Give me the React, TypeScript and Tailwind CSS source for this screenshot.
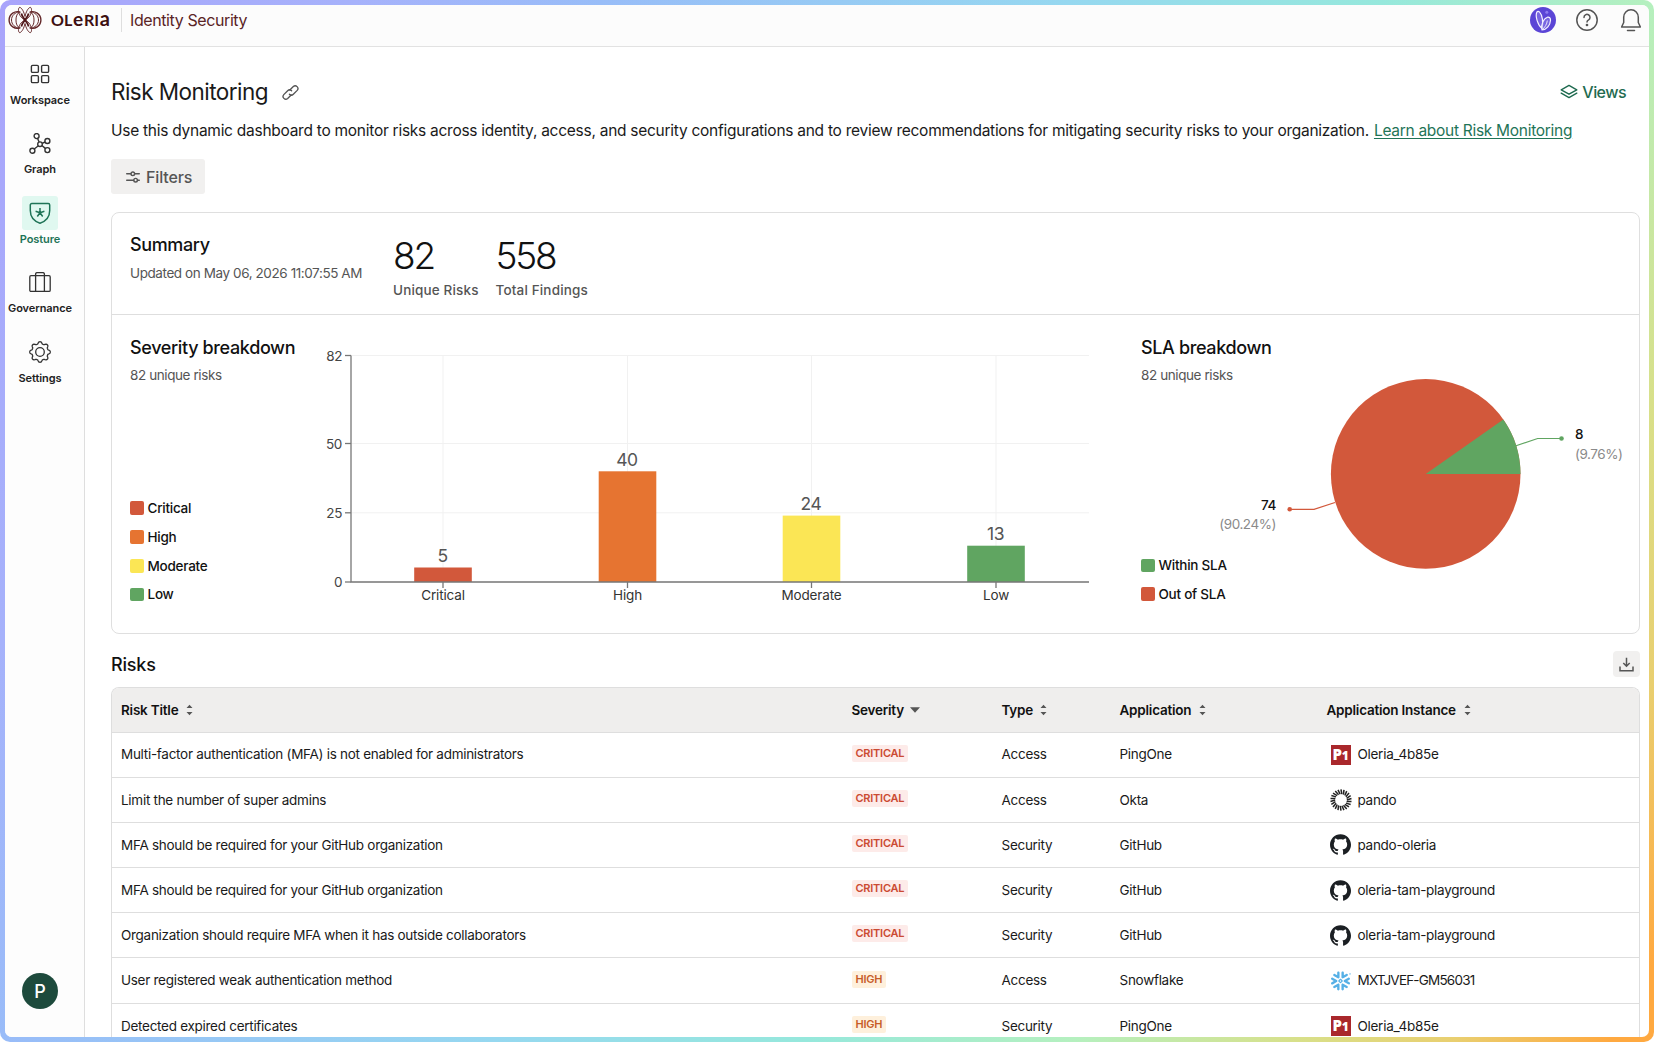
import type { ReactNode } from 'react'
import { SiGithub, SiSnowflake } from 'react-icons/si'

type Severity = 'CRITICAL' | 'HIGH'
type Brand = 'ping' | 'okta' | 'github' | 'snowflake'

interface Risk {
  title: string
  severity: Severity
  type: string
  application: string
  brand: Brand
  instance: string
}

const risks: Risk[] = [
  { title: 'Multi-factor authentication (MFA) is not enabled for administrators', severity: 'CRITICAL', type: 'Access', application: 'PingOne', brand: 'ping', instance: 'Oleria_4b85e' },
  { title: 'Limit the number of super admins', severity: 'CRITICAL', type: 'Access', application: 'Okta', brand: 'okta', instance: 'pando' },
  { title: 'MFA should be required for your GitHub organization', severity: 'CRITICAL', type: 'Security', application: 'GitHub', brand: 'github', instance: 'pando-oleria' },
  { title: 'MFA should be required for your GitHub organization', severity: 'CRITICAL', type: 'Security', application: 'GitHub', brand: 'github', instance: 'oleria-tam-playground' },
  { title: 'Organization should require MFA when it has outside collaborators', severity: 'CRITICAL', type: 'Security', application: 'GitHub', brand: 'github', instance: 'oleria-tam-playground' },
  { title: 'User registered weak authentication method', severity: 'HIGH', type: 'Access', application: 'Snowflake', brand: 'snowflake', instance: 'MXTJVEF-GM56031' },
  { title: 'Detected expired certificates', severity: 'HIGH', type: 'Security', application: 'PingOne', brand: 'ping', instance: 'Oleria_4b85e' },
]

const severityLegend = [
  { label: 'Critical', color: 'bg-[#d2583b]' },
  { label: 'High', color: 'bg-[#e67431]' },
  { label: 'Moderate', color: 'bg-[#fbe655]' },
  { label: 'Low', color: 'bg-[#60a561]' },
]

const slaLegend = [
  { label: 'Within SLA', color: 'bg-[#60a561]' },
  { label: 'Out of SLA', color: 'bg-[#d2583b]' },
]

const bars = [
  { label: 'Critical', value: 5, x: 134, top: 227.5, fill: '#d2583b' },
  { label: 'High', value: 40, x: 318.5, top: 131.3, fill: '#e67431' },
  { label: 'Moderate', value: 24, x: 502.5, top: 175.6, fill: '#fbe655' },
  { label: 'Low', value: 13, x: 687, top: 205.7, fill: '#60a561' },
]

const yTicks = [
  { label: '82', y: 15.5 },
  { label: '50', y: 103.5 },
  { label: '25', y: 172.8 },
  { label: '0', y: 242 },
]

// eight-lobed gear outline around (11, 11)
const gearPath =
  Array.from({ length: 96 }, (_, i) => {
    const a = (i / 96) * Math.PI * 2
    const r = 9.2 + 1.1 * Math.tanh(1.8 * Math.cos(8 * a))
    return `${i === 0 ? 'M' : 'L'}${(11 + r * Math.sin(a)).toFixed(2)} ${(11 - r * Math.cos(a)).toFixed(2)}`
  }).join('') + 'Z'

function OleriaMark() {
  return (
    <svg width="36" height="28" viewBox="0 0 36 28" fill="none" stroke="#64282a" strokeWidth="1">
      <g id="wing">
        <path d="M13.500 6.300A8.300 8.300 0 1 0 13.500 21.700" strokeWidth="1.400" />
        <path d="M12.500 5.600C8 6.500 4.500 9.500 4.500 14s3.500 7.500 8 8.400" />
        <path d="M18 10.500C17 6 15 2 12.800 1.300C10.800 1.800 11.200 6.500 13 9.500C14.500 12 16.500 13.500 18 14C16.500 14.500 14.500 16 13 18.500C11.200 21.500 10.800 26.200 12.800 26.700C15 26 17 22 18 17.500" />
        <path d="M12 6.500C9.500 8.500 9 11 9 14s.5 5.500 3 7.500" />
        <path d="M14.300 7.500C15 10 16 11.500 18 14C16 16.500 15 18 14.300 20.500" strokeWidth="1.800" stroke="#4c1517" />
      </g>
      <use href="#wing" transform="translate(36 0) scale(-1 1)" />
    </svg>
  )
}

function AssistantBadge() {
  return (
    <svg width="26" height="26" viewBox="0 0 26 26">
      <circle cx="13" cy="13" r="13" fill="#5b45d6" />
      <g fill="#8f80ea" fillOpacity=".55" stroke="#f3f0ff" strokeWidth="1.200">
        <path d="M12 21.500C8 18.500 5 9.500 6.800 5.300C7.300 4.200 8.700 4.200 9.600 5.200C12.300 8 13.600 15.500 12 21.500Z" />
        <path d="M12 22.800C10.800 17.500 13.500 11.500 17.500 10.200C19.300 9.800 20.600 11 20.500 13.200C20.300 18 16.500 22.800 12 22.800Z" />
        <path d="M12 22.800C15 20.500 17 17 17.300 13.500" fill="none" strokeWidth=".9" />
      </g>
      <circle cx="16.800" cy="5.200" r="1.500" fill="#8b7bee" />
    </svg>
  )
}

function HelpIcon() {
  return (
    <svg width="24" height="24" viewBox="0 0 24 24" fill="none" stroke="#555" strokeWidth="1.500" strokeLinecap="round">
      <circle cx="12" cy="12" r="10.200" />
      <path d="M9 9.400a3 3 0 1 1 4.600 2.500c-1.100 .6-1.600 1.200-1.600 2.100" />
      <circle cx="12" cy="17" r=".6" fill="#555" />
    </svg>
  )
}

function BellIcon() {
  return (
    <svg width="22" height="24" viewBox="0 0 22 24" fill="none" stroke="#555" strokeWidth="1.500" strokeLinejoin="round" strokeLinecap="round">
      <path d="M1.600 19h18.800L18.300 14.500V9.300C18.300 5 15.200 1.800 11 1.800S3.700 5 3.700 9.300v5.200Z" />
      <path d="M7.500 22.600h7" />
    </svg>
  )
}

function WorkspaceIcon() {
  return (
    <svg width="22" height="22" viewBox="0 0 22 22" fill="none" stroke="#333" strokeWidth="1.400">
      <rect x="2.400" y="2.400" width="7" height="7" rx="1.200" />
      <rect x="12.600" y="2.400" width="7" height="7" rx="1.200" />
      <rect x="2.400" y="12.600" width="7" height="7" rx="1.200" />
      <rect x="12.600" y="12.600" width="7" height="7" rx="1.200" />
    </svg>
  )
}

function GraphIcon() {
  return (
    <svg width="22" height="22" viewBox="0 0 22 22" fill="none" stroke="#333" strokeWidth="1.400">
      <circle cx="11" cy="11.200" r="2.300" />
      <circle cx="7.600" cy="3.100" r="2.500" />
      <circle cx="18.400" cy="8" r="2.500" />
      <circle cx="3.400" cy="17.700" r="2.500" />
      <circle cx="18.400" cy="17.100" r="2.500" />
      <path d="M8.600 5.400l1.500 3.600M13.200 10.300l2.900-1.300M9.400 12.800l-4.200 3.200M12.900 12.500l3.400 2.900" />
    </svg>
  )
}

function ShieldIcon() {
  return (
    <svg width="22" height="22" viewBox="0 0 22 22" fill="none" stroke="#1f7457" strokeWidth="1.500" strokeLinejoin="round">
      <path d="M2.800 1.500h16.400a1.500 1.500 0 0 1 1.500 1.500v5.500c0 7-4.700 11-9.700 12.700C6 19.500 1.300 15.500 1.300 8.500V3a1.500 1.500 0 0 1 1.500-1.500Z" />
      <path d="M11 6v4.700M11 10.700l4.400-1.400M11 10.700l2.700 3.800M11 10.700l-2.700 3.800M11 10.700L6.600 9.300" />
    </svg>
  )
}

function GovernanceIcon() {
  return (
    <svg width="22" height="22" viewBox="0 0 22 22" fill="none" stroke="#333" strokeWidth="1.300" strokeLinejoin="round">
      <rect x=".8" y="3.700" width="20.400" height="15.700" rx="1.200" />
      <path d="M6.600 19.400V2.200a1.600 1.600 0 0 1 1.600-1.600h5.600a1.600 1.600 0 0 1 1.600 1.600v17.200" />
    </svg>
  )
}

function SettingsIcon() {
  return (
    <svg width="22" height="22" viewBox="0 0 22 22" fill="none" stroke="#333" strokeWidth="1.300" strokeLinejoin="round">
      <circle cx="11" cy="11" r="4.300" />
      <path d={gearPath} />
    </svg>
  )
}

function LinkIcon() {
  return (
    <svg width="17" height="17" viewBox="0 0 24 24" fill="none" stroke="#555" strokeWidth="1.900" strokeLinecap="round" strokeLinejoin="round">
      <path d="M11 8.500l5-5a3.900 3.900 0 0 1 5.500 5.500l-5.500 5.500a3.900 3.900 0 0 1-5.500 0" />
      <path d="M13 15.500l-5 5A3.900 3.900 0 0 1 2.500 15L8 9.500a3.900 3.900 0 0 1 5.500 0" />
    </svg>
  )
}

function ViewsIcon() {
  return (
    <svg width="18" height="16" viewBox="0 0 18 16" fill="none" stroke="#1f6b50" strokeWidth="1.400" strokeLinejoin="round" strokeLinecap="round">
      <path d="M9 1.400l7.800 4.400L9 10.200 1.200 5.800Z" />
      <path d="M1.200 9.200L9 13.600l7.800-4.400" />
    </svg>
  )
}

function FiltersIcon() {
  return (
    <svg width="14" height="12" viewBox="0 0 14 12" fill="none" stroke="#555" strokeWidth="1.400" strokeLinecap="round">
      <path d="M.7 2.800h4.200M8.700 2.800h4.600M.7 9.200h7M11.500 9.200h1.800" />
      <circle cx="6.800" cy="2.800" r="1.800" />
      <circle cx="9.600" cy="9.200" r="1.800" />
    </svg>
  )
}

function DownloadIcon() {
  return (
    <svg width="15" height="15" viewBox="0 0 15 15" fill="none" stroke="#555" strokeWidth="1.500">
      <path d="M7.500 .8v8.400M4.300 6l3.200 3.200L10.700 6M1 9.500v4.300h13V9.500" />
    </svg>
  )
}

function SortIcon() {
  return (
    <svg width="7" height="12" viewBox="0 0 7 12" fill="#555">
      <path d="M3.500 .8L6.500 4H.5ZM3.500 11.200L6.500 8H.5Z" />
    </svg>
  )
}

function BrandIcon({ brand }: { brand: Brand }) {
  if (brand === 'github') return <SiGithub className="size-[21px] text-[#1b1f23]" />
  if (brand === 'snowflake') return <SiSnowflake className="size-[20px] text-[#56b0e6]" />
  if (brand === 'okta') {
    return (
      <svg width="22" height="22" viewBox="-11 -11 22 22" stroke="#222" strokeWidth="1.500">
        {Array.from({ length: 22 }, (_, i) => (
          <path key={i} d="M.8-5.800L0-10.600" transform={`rotate(${(i * 360) / 22})`} />
        ))}
      </svg>
    )
  }
  return (
    <span className="flex size-5 items-center justify-center bg-[#a9282c] font-['Open_Sans'] text-[15px] font-extrabold leading-none text-white">
      P<span className="pt-[2px] text-[12px] leading-none">1</span>
    </span>
  )
}

function NavItem({ icon, label, active }: { icon: ReactNode; label: string; active?: boolean }) {
  return (
    <div className="flex h-[69.600px] flex-col items-center">
      <div className={active ? 'flex h-[34px] w-[36px] items-center justify-center rounded-[3px] bg-[#e0f8f0]' : 'flex h-[34px] w-[36px] items-center justify-center'}>
        {icon}
      </div>
      <span className={active ? 'mt-[.5px] text-[11px] font-semibold leading-4 tracking-[-0.070px] text-[#1f7457]' : 'mt-[.5px] text-[11px] font-semibold leading-4 tracking-[-0.070px] text-[#222]'}>
        {label}
      </span>
    </div>
  )
}

function Legend({ items }: { items: { label: string; color: string }[] }) {
  return (
    <div className="flex flex-col">
      {items.map((item) => (
        <div key={item.label} className="flex h-[28.800px] items-center gap-[4px]">
          <span className={`size-[13.500px] rounded-[2px] ${item.color}`} />
          <span className="text-[13.500px] font-medium tracking-[-0.250px] text-[#111]">{item.label}</span>
        </div>
      ))}
    </div>
  )
}

function SeverityChart() {
  // 1 unit = 1px, origin sits at the left of the tick labels
  return (
    <svg width="790" height="275" viewBox="0 0 790 275" className="font-['Inter']">
      <g stroke="#f1f1f1">
        {yTicks.map((t) => (
          <path key={t.label} d={`M42 ${t.y}H780`} />
        ))}
        {bars.map((b) => (
          <path key={b.label} d={`M${b.x} 15.500V242`} />
        ))}
      </g>
      {bars.map((b) => (
        <g key={b.label}>
          <rect x={b.x - 28.8} y={b.top} width="57.600" height={242 - b.top} fill={b.fill} />
          <text x={b.x - 0.5} y={b.top - 5.5} textAnchor="middle" fontSize="17.500" letterSpacing="-.4" fill="#555">{b.value}</text>
          <text x={b.x} y="260" textAnchor="middle" fontSize="13.500" letterSpacing="-.15" fill="#333">{b.label}</text>
        </g>
      ))}
      <g stroke="#777" strokeWidth="1.300">
        <path d="M42 15.500V242H780" fill="none" />
        {yTicks.map((t) => (
          <path key={t.label} d={`M36 ${t.y}H42`} />
        ))}
        {bars.map((b) => (
          <path key={b.label} d={`M${b.x} 242V248`} />
        ))}
      </g>
      {yTicks.map((t) => (
        <text key={t.label} x="33" y={t.y + 5} textAnchor="end" fontSize="13.500" letterSpacing="-.4" fill="#444">{t.label}</text>
      ))}
    </svg>
  )
}

function SlaChart() {
  return (
    <svg width="422" height="220" viewBox="0 0 422 220" className="font-['Inter']" fontSize="13.500" letterSpacing="-.45">
      <circle cx="224.700" cy="108.900" r="94.800" fill="#d2583b" />
      <path d="M224.700 108.900H319.500A94.800 94.800 0 0 0 302.300 54.400Z" fill="#60a561" />
      <g fill="none" strokeWidth="1.200">
        <path d="M315 80.700L336.600 73.500H360" stroke="#60a561" />
        <path d="M134 137.500L113 144.300H89" stroke="#d2583b" />
      </g>
      <circle cx="360.500" cy="73.500" r="2.300" fill="#60a561" />
      <circle cx="88.700" cy="144.300" r="2.300" fill="#d2583b" />
      <text x="374" y="74" fill="#111" fontWeight="500">8</text>
      <text x="374" y="93.500" fill="#8a8a8a">(9.76%)</text>
      <text x="75" y="144.500" fill="#111" fontWeight="500" textAnchor="end">74</text>
      <text x="75" y="164" fill="#8a8a8a" textAnchor="end">(90.24%)</text>
    </svg>
  )
}

function Stat({ value, label }: { value: string; label: string }) {
  return (
    <div className="flex flex-col">
      <span className="text-[37px] font-light leading-[44px] tracking-[-2.200px] text-[#111]">{value}</span>
      <span className="mt-[2px] text-[13.500px] font-medium leading-5 tracking-[0.150px] text-[#555]">{label}</span>
    </div>
  )
}

function PanelHeading({ title, note }: { title: string; note: string }) {
  return (
    <>
      <h2 className="text-[18px] font-medium leading-6 tracking-[-0.360px] text-[#111]">{title}</h2>
      <p className="mt-[5.500px] text-[13.500px] leading-5 tracking-[-0.410px] text-[#555]">{note}</p>
    </>
  )
}

const columns = 'grid grid-cols-[730.500px_150px_118px_207px_1fr] pl-[9px]'

function RisksTable() {
  return (
    <div className="mt-[10px] flex-1 overflow-hidden rounded-t-lg border border-b-0 border-[#dedede]">
      <div className={`${columns} h-[44.500px] items-center border-b border-[#dedede] bg-[#efeeed] text-[13.500px] font-semibold tracking-[-0.220px] text-[#111]`}>
        <div className="flex items-center gap-[8px]">Risk Title <SortIcon /></div>
        <div className="flex items-center gap-[6px]">
          Severity
          <svg width="10" height="6" viewBox="0 0 10 6" fill="#555"><path d="M0 .3h10L5 5.700Z" /></svg>
        </div>
        <div className="flex items-center gap-[7px]">Type <SortIcon /></div>
        <div className="flex items-center gap-[8px]">Application <SortIcon /></div>
        <div className="flex items-center gap-[8px]">Application Instance <SortIcon /></div>
      </div>
      {risks.map((risk, i) => (
        <div key={i} className={`${columns} h-[45.200px] items-center border-b border-[#dedede] text-[13.500px] tracking-[-0.280px] text-[#1a1a1a]`}>
          <div>{risk.title}</div>
          <div className="flex pb-[3px]">
            <span
              className={
                risk.severity === 'CRITICAL'
                  ? 'rounded-[2px] bg-[#fdebe9] px-[4px] text-[11px] font-semibold leading-[17px] tracking-[-0.250px] text-[#cb4a32]'
                  : 'rounded-[2px] bg-[#fef0dc] px-[4px] text-[11px] font-semibold leading-[17px] tracking-[-0.250px] text-[#c75c28]'
              }
            >
              {risk.severity}
            </span>
          </div>
          <div>{risk.type}</div>
          <div>{risk.application}</div>
          <div className="flex items-center gap-[6px]">
            <span className="ml-[3px] flex w-[22px] justify-center"><BrandIcon brand={risk.brand} /></span>
            <span className={risk.brand === 'snowflake' ? 'tracking-[-0.800px]' : ''}>{risk.instance}</span>
          </div>
        </div>
      ))}
    </div>
  )
}

export default function App() {
  return (
    <div className="h-[1042px] w-[1654px] overflow-hidden rounded-[10px] bg-[linear-gradient(119deg,#a9a4fb_0%,#a6b2fb_16%,#98bdf8_27%,#96d8f0_48%,#96e8dc_62%,#b5f0bf_74%,#d8e08a_84%,#e9cf70_91%,#ffa940_98%)] p-[5px] font-['Inter',sans-serif] text-[#1a1a1a]">
      <div className="flex h-full flex-col overflow-hidden rounded-[7px] bg-white">
        <header className="flex h-[42px] shrink-0 items-start border-b-[1.500px] border-[#e2e2e2] bg-[#fcfcfc] pl-[2px]">
          <div className="mt-[1px] flex items-center">
            <OleriaMark />
            <span className="ml-[8px] flex h-[28px] w-[70px] items-baseline gap-[.8px] font-['Lato'] text-[16px] font-bold leading-[27px] text-[#3d0f11]">
              OL<span className="text-[19px] leading-none">e</span>RI<span className="text-[20px] leading-none">a</span>
            </span>
            <span className="h-6 w-px bg-[#dedede]" />
            <span className="ml-[8px] text-[16px] tracking-[-0.400px] text-[#5a2426]">Identity Security</span>
          </div>
          <div className="ml-auto flex items-center pr-[7px] pt-[2px]">
            <AssistantBadge />
            <span className="ml-[19px]"><HelpIcon /></span>
            <span className="ml-[21px]"><BellIcon /></span>
          </div>
        </header>
        <div className="flex min-h-0 flex-1">
          <aside className="flex w-[80px] shrink-0 flex-col items-center border-r border-[#dedede] bg-[#fdfdfd] pr-[9px] pt-[10px]">
            <NavItem icon={<WorkspaceIcon />} label="Workspace" />
            <NavItem icon={<GraphIcon />} label="Graph" />
            <NavItem icon={<ShieldIcon />} label="Posture" active />
            <NavItem icon={<GovernanceIcon />} label="Governance" />
            <NavItem icon={<SettingsIcon />} label="Settings" />
            <div className="mb-[28px] mt-auto flex size-[36px] shrink-0 items-center justify-center rounded-full bg-[#1d4a3c] text-[18px] font-medium text-white">P</div>
          </aside>
          <main className="flex min-w-0 flex-1 flex-col pl-[26px] pr-[9px] pt-[27px]">
            <div className="flex h-9 shrink-0 items-center">
              <h1 className="text-[22.500px] tracking-[-0.540px]">Risk Monitoring</h1>
              <span className="ml-[14px]"><LinkIcon /></span>
              <span className="ml-auto flex items-center gap-[4px] pr-[14px] text-[16px] font-medium tracking-[-0.550px] text-[#1f6b50]"><ViewsIcon />Views</span>
            </div>
            <p className="mt-[9px] h-6 shrink-0 whitespace-nowrap text-[15.500px] leading-6 tracking-[-0.266px]">
              Use this dynamic dashboard to monitor risks across identity, access, and security configurations and to review recommendations for mitigating security risks to your organization.
              <a className="ml-[5px] tracking-[-0.290px] text-[#1f7457] underline underline-offset-2">Learn about Risk Monitoring</a>
            </p>
            <button className="mt-[16px] flex h-[35px] w-[94px] shrink-0 items-center gap-[6px] rounded-[3px] bg-[#f1f0ef] pl-[15px] text-[16px] font-medium tracking-[-0.150px] text-[#555]">
              <FiltersIcon />Filters
            </button>
            <section className="mt-[18px] h-[422px] shrink-0 rounded-lg border-[1.500px] border-[#dfdfdf]">
              <div className="flex h-[102px] border-b border-[#dedede] pl-[18px]">
                <div className="w-[263px] pt-[20px]">
                  <PanelHeading title="Summary" note="Updated on May 06, 2026 11:07:55 AM" />
                </div>
                <div className="flex gap-[17px] pt-[21px]">
                  <Stat value="82" label="Unique Risks" />
                  <Stat value="558" label="Total Findings" />
                </div>
              </div>
              <div className="flex h-[318px] pl-[18px]">
                <div className="flex w-[179px] flex-col pb-[24px] pt-[20.500px]">
                  <PanelHeading title="Severity breakdown" note="82 unique risks" />
                  <div className="mt-auto"><Legend items={severityLegend} /></div>
                </div>
                <div className="pt-[25px]"><SeverityChart /></div>
                <div className="relative ml-[42px] flex flex-1 flex-col pb-[24.500px] pt-[20.500px]">
                  <PanelHeading title="SLA breakdown" note="82 unique risks" />
                  <div className="absolute left-[60px] top-[50px]"><SlaChart /></div>
                  <div className="mt-auto"><Legend items={slaLegend} /></div>
                </div>
              </div>
            </section>
            <div className="mt-[17px] flex h-[26px] shrink-0 items-center justify-between">
              <h2 className="text-[18px] font-medium tracking-[-0.200px] text-[#111]">Risks</h2>
              <button className="flex h-[26px] w-[27px] items-center justify-center rounded-[4px] bg-[#f1f0ef]"><DownloadIcon /></button>
            </div>
            <RisksTable />
          </main>
        </div>
      </div>
    </div>
  )
}
